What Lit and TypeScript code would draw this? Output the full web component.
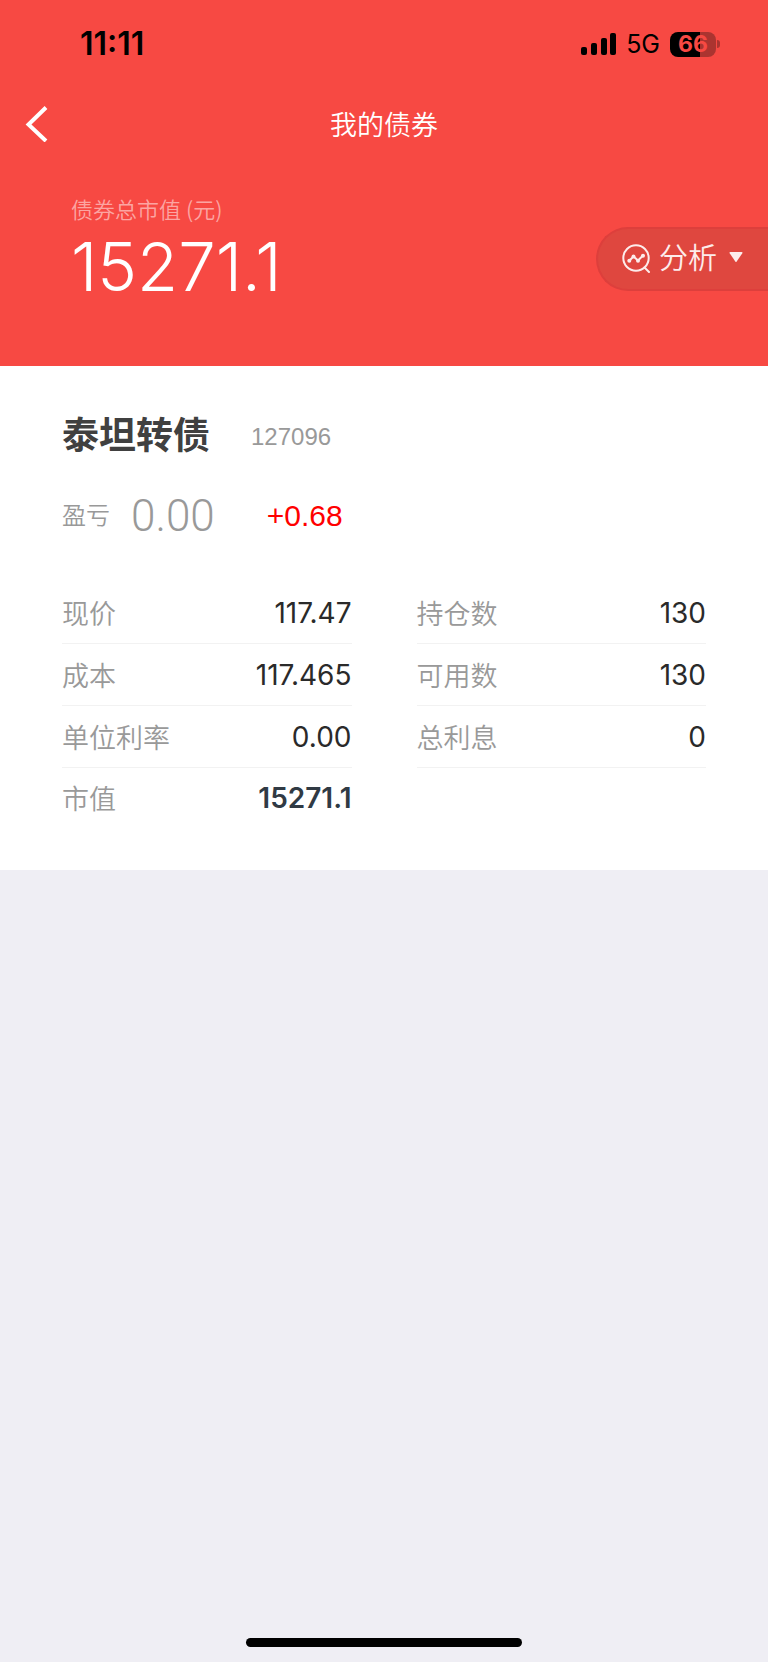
import { LitElement, html, css, svg } from "lit";
import { customElement } from "lit/decorators.js";

interface Field {
  label: string;
  value: string;
  strong?: boolean;
}

const LEFT: Field[] = [
  { label: "现价", value: "117.47" },
  { label: "成本", value: "117.465" },
  { label: "单位利率", value: "0.00" },
  { label: "市值", value: "15271.1", strong: true },
];

const RIGHT: Field[] = [
  { label: "持仓数", value: "130" },
  { label: "可用数", value: "130" },
  { label: "总利息", value: "0" },
];

@customElement("status-bar")
export class StatusBar extends LitElement {
  static styles = css`
    :host {
      display: flex;
      align-items: center;
      height: 88px;
      padding: 0 48px 0 80px;
      color: #000;
    }
    .time {
      flex: 1;
      font-size: 32px;
      line-height: 36px;
      font-weight: 600;
    }
    .signal {
      display: block;
      width: 36px;
      height: 24px;
      margin-right: 9px;
    }
    .network {
      font-size: 25px;
      line-height: 34px;
      font-weight: 400;
      margin-right: 10px;
    }
    .battery {
      display: flex;
      align-items: center;
      gap: 1px;
    }
    .cell {
      width: 46px;
      height: 25px;
      border-radius: 8px;
      background: linear-gradient(to right, #000 66%, #ab3430 66%);
      color: #f74943;
      font-size: 23px;
      line-height: 25px;
      font-weight: 700;
      text-align: center;
    }
    .nub {
      width: 3px;
      height: 8px;
      border-radius: 0 4px 4px 0;
      background: #ab3430;
    }
  `;

  render() {
    return html`
      <span class="time">11:11</span>
      <svg class="signal" viewBox="0 0 36 24" aria-hidden="true">
        ${[
          [0, 15, 8],
          [10, 11, 12],
          [20, 6, 17],
          [29, 1, 22],
        ].map(([x, y, h]) => svg`<rect x=${x} y=${y} width="6" height=${h} rx="2" />`)}
      </svg>
      <span class="network">5G</span>
      <span class="battery">
        <span class="cell">66</span>
        <span class="nub"></span>
      </span>
    `;
  }
}

@customElement("field-list")
export class FieldList extends LitElement {
  static properties = { fields: { attribute: false } };
  declare fields: Field[];

  static styles = css`
    .list {
      margin: 0;
    }
    .row {
      display: flex;
      align-items: center;
      justify-content: space-between;
      box-sizing: border-box;
      height: 62px;
      border-bottom: 1px solid #f2f2f2;
    }
    .row:nth-child(4) {
      height: 60px;
      border-bottom: 0;
    }
    dt {
      font-family: "Noto Sans CJK SC", sans-serif;
      font-size: 27px;
      line-height: 40px;
      font-weight: 350;
      color: #999;
    }
    dd {
      margin: 0;
      font-size: 28px;
      line-height: 40px;
      color: #2a2a2a;
    }
    .strong {
      font-weight: 600;
      color: #303a44;
    }
  `;

  render() {
    return html`
      <dl class="list">
        ${this.fields.map(
          (f) => html`
            <div class="row">
              <dt>${f.label}</dt>
              <dd class=${f.strong ? "strong" : ""}>${f.value}</dd>
            </div>
          `
        )}
      </dl>
    `;
  }
}

@customElement("app-root")
export class AppRoot extends LitElement {
  static styles = css`
    :host {
      display: flex;
      flex-direction: column;
      min-height: 100vh;
      background: #efeef4;
      font-family: Inter, "Noto Sans CJK SC", sans-serif;
    }
    button {
      font: inherit;
      color: inherit;
      cursor: pointer;
    }
    svg {
      display: block;
    }
    .top {
      background: #f74943;
      color: #fff;
    }
    .nav {
      display: grid;
      grid-template-columns: 72px 1fr 72px;
      align-items: center;
      height: 72px;
    }
    .back {
      display: flex;
      align-items: center;
      height: 72px;
      padding: 0 0 0 24px;
      border: 0;
      background: none;
    }
    .title {
      margin: 0;
      text-align: center;
      font-family: "Noto Sans CJK SC", sans-serif;
      font-size: 27px;
      line-height: 40px;
      font-weight: 350;
    }
    .summary {
      display: flex;
      justify-content: space-between;
      align-items: flex-start;
      padding: 36px 0 67px 71px;
    }
    .caption {
      margin: 0 0 15px;
      font-family: "Noto Sans CJK SC", sans-serif;
      font-size: 22px;
      line-height: 24px;
      font-weight: 350;
      color: #fca5a2;
    }
    .total {
      margin: 0;
      font-size: 67px;
      line-height: 64px;
      font-weight: 350;
    }
    .analyse {
      display: flex;
      align-items: center;
      box-sizing: border-box;
      height: 64px;
      margin-top: 31px;
      padding: 0 25px 0 24px;
      border: 2px solid #dd3f3c;
      border-right: 0;
      border-radius: 32px 0 0 32px;
      background: #df473f;
      color: #fdeceb;
      font-size: 29px;
      line-height: 42px;
      font-weight: 350;
    }
    .analyse svg {
      margin-bottom: 2px;
    }
    .analyse-text {
      margin: 0 12px 0 8px;
    }
    .card {
      background: #fff;
      padding: 43px 62px 42px;
    }
    .heading {
      display: flex;
      align-items: flex-end;
      gap: 41px;
    }
    .name {
      margin: 0;
      font-family: "Noto Sans CJK SC", sans-serif;
      font-size: 37px;
      line-height: 48px;
      font-weight: 700;
      color: #404040;
    }
    .code {
      font-family: "Liberation Sans", sans-serif;
      font-size: 24px;
      line-height: 40px;
      color: #999;
    }
    .profit {
      display: flex;
      align-items: center;
      height: 48px;
      margin: 35px 0 42px;
      font-family: Roboto, "Noto Sans CJK SC", sans-serif;
      font-weight: 350;
      color: #999;
    }
    .profit-label {
      font-size: 24px;
      line-height: 40px;
      margin-right: 21px;
    }
    .profit-value {
      font-size: 44px;
      line-height: 50px;
      margin-right: 52px;
    }
    .profit-change {
      font-family: "Liberation Sans", sans-serif;
      font-size: 30px;
      color: #f00;
    }
    .fields {
      display: grid;
      grid-template-columns: 1fr 1fr;
      gap: 65px;
    }
    .home {
      width: 36%;
      height: 9px;
      margin: auto auto 15px;
      border-radius: 5px;
      background: #000;
    }
  `;

  render() {
    return html`
      <header class="top">
        <status-bar></status-bar>
        <nav class="nav">
          <button class="back" aria-label="返回">
            <svg width="24" height="36" viewBox="0 0 24 36" fill="none" stroke="#fff" stroke-width="4">
              <path d="M22 1.5 4.5 18.5 22 35" />
            </svg>
          </button>
          <h1 class="title">我的债券</h1>
        </nav>
        <section class="summary">
          <div>
            <p class="caption">债券总市值 (元)</p>
            <p class="total">15271.1</p>
          </div>
          <button class="analyse">
            <svg width="29" height="29" viewBox="0 0 29 29" fill="none" stroke="currentColor" stroke-width="2" stroke-linecap="round" stroke-linejoin="round">
              <circle cx="14" cy="14" r="12.7" />
              <path d="M22.5 23.5 27 28" />
              <path d="M7.5 16.5 11.5 12.5 16 16.5 21 11.5" />
              <g fill="currentColor" stroke="none">
                <circle cx="7.3" cy="16.7" r="2" />
                <circle cx="11.5" cy="12.5" r="2" />
                <circle cx="16" cy="16.7" r="2" />
                <circle cx="21" cy="11.7" r="2" />
              </g>
            </svg>
            <span class="analyse-text">分析</span>
            <svg width="14" height="12" viewBox="0 0 14 12" fill="currentColor">
              <path d="M1.4 0h11.2q1.4 0 .7 1.2L7.7 9.6q-.7 1-1.4 0L.7 1.2Q0 0 1.4 0z" />
            </svg>
          </button>
        </section>
      </header>
      <main class="card">
        <div class="heading">
          <h2 class="name">泰坦转债</h2>
          <span class="code">127096</span>
        </div>
        <div class="profit">
          <span class="profit-label">盈亏</span>
          <span class="profit-value">0.00</span>
          <span class="profit-change">+0.68</span>
        </div>
        <div class="fields">
          <field-list .fields=${LEFT}></field-list>
          <field-list .fields=${RIGHT}></field-list>
        </div>
      </main>
      <div class="home"></div>
    `;
  }
}
